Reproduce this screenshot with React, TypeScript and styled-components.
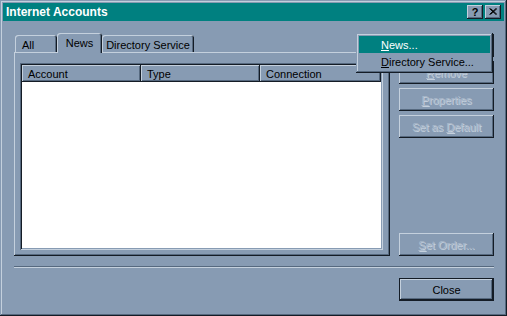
import styled, { createGlobalStyle } from 'styled-components'

const face = '#879bb3'
const light = '#c4d0dd'
const shadow = '#56697f'
const dark = '#141c26'
const teal = '#008080'

const GlobalStyle = createGlobalStyle`
  html, body {
    margin: 0;
    padding: 0;
    background: ${face};
  }
  body {
    font-family: "Liberation Sans", Arial, sans-serif;
    font-size: 11px;
  }
`

const Window = styled.div`
  position: relative;
  width: 507px;
  height: 316px;
  box-sizing: border-box;
  padding: 3px;
  background: ${face};
  box-shadow: inset -1px -1px 0 ${dark}, inset 1px 1px 0 ${face},
    inset -2px -2px 0 ${shadow}, inset 2px 2px 0 ${light};
  display: flex;
  flex-direction: column;
`

const TitleBar = styled.div`
  height: 18px;
  background: ${teal};
  display: flex;
  align-items: center;
  justify-content: space-between;
  padding: 0 3px 0 3px;
`

const Title = styled.span`
  color: #fff;
  font-weight: bold;
  font-size: 12px;
`

const TitleButtons = styled.div`
  display: flex;
  gap: 2px;
`

const TitleButton = styled.div`
  width: 16px;
  height: 14px;
  box-sizing: border-box;
  background: ${face};
  box-shadow: inset -1px -1px 0 ${dark}, inset 1px 1px 0 ${light},
    inset -2px -2px 0 ${shadow};
  display: flex;
  align-items: center;
  justify-content: center;
  font-weight: bold;
  font-size: 11px;
  color: #000;
  padding-bottom: 1px;
`

const Content = styled.div`
  flex: 1;
  display: flex;
  flex-direction: column;
  padding: 12px 10px 0 11px;
`

const MainRow = styled.div`
  display: flex;
  gap: 9px;
`

const TabArea = styled.div`
  width: 376px;
  display: flex;
  flex-direction: column;
`

const TabStrip = styled.div`
  height: 19px;
  display: flex;
  align-items: flex-end;
  padding-left: 1px;
`

const Tab = styled.div<{ $active?: boolean; $w: number; $left?: boolean }>`
  position: relative;
  z-index: ${(p) => (p.$active ? 2 : 1)};
  width: ${(p) => p.$w}px;
  height: ${(p) => (p.$active ? 20 : 17)}px;
  margin-bottom: ${(p) => (p.$active ? -1 : 0)}px;
  box-sizing: border-box;
  background: ${face};
  border-radius: 3px 3px 0 0;
  box-shadow: inset 1px 1px 0 ${light}, inset -1px 0 0 ${dark},
    inset -2px 0 0 ${shadow};
  display: flex;
  align-items: center;
  justify-content: ${(p) => (p.$left ? 'flex-start' : 'center')};
  padding-left: ${(p) => (p.$left ? 7 : 0)}px;
  padding-top: ${(p) => (p.$active ? 0 : 2)}px;
  color: #000;
  font-size: 11px;
`

const TabPanel = styled.div`
  height: 204px;
  box-sizing: border-box;
  background: ${face};
  box-shadow: inset -1px -1px 0 ${dark}, inset 1px 1px 0 ${light},
    inset -2px -2px 0 ${shadow};
  padding: 11px 7px 6px 6px;
  display: flex;
`

const ListBox = styled.div`
  flex: 1;
  box-sizing: border-box;
  background: #fff;
  padding: 2px;
  box-shadow: inset 1px 1px 0 ${shadow}, inset -1px -1px 0 ${light},
    inset 2px 2px 0 ${dark}, inset -2px -2px 0 ${face};
  display: flex;
  flex-direction: column;
`

const HeaderRow = styled.div`
  display: flex;
  height: 17px;
`

const HeaderCell = styled.div<{ $w?: number }>`
  ${(p) => (p.$w ? `width: ${p.$w}px;` : 'flex: 1;')}
  box-sizing: border-box;
  background: ${face};
  box-shadow: inset -1px -1px 0 ${dark}, inset 1px 1px 0 ${light},
    inset -2px -2px 0 ${shadow};
  padding: 1px 0 0 6px;
  display: flex;
  align-items: center;
  color: #000;
  font-size: 11px;
`

const ButtonColumn = styled.div`
  width: 95px;
  padding-top: 1px;
  display: flex;
  flex-direction: column;
  gap: 4px;
`

const Button = styled.div<{ $disabled?: boolean; $default?: boolean }>`
  height: 23px;
  box-sizing: border-box;
  background: ${face};
  display: flex;
  align-items: center;
  justify-content: center;
  font-size: 11px;
  color: ${(p) => (p.$disabled ? '#a9b8ca' : '#000')};
  text-shadow: ${(p) => (p.$disabled ? `1px 1px 0 ${light}` : 'none')};
  box-shadow: ${(p) =>
    p.$default
      ? `inset 0 0 0 1px ${dark}, inset -2px -2px 0 ${dark}, inset 2px 2px 0 ${light}, inset -3px -3px 0 ${shadow}`
      : `inset -1px -1px 0 ${dark}, inset 1px 1px 0 ${light}, inset -2px -2px 0 ${shadow}`};
  u {
    text-decoration: underline;
  }
`

const Spacer = styled.div`
  flex: 1;
`

const Separator = styled.div`
  margin-top: 10px;
  height: 0;
  border-top: 1px solid ${shadow};
  border-bottom: 1px solid ${light};
`

const Footer = styled.div`
  display: flex;
  justify-content: flex-end;
  margin-top: 10px;
`

const FooterButton = styled(Button)`
  width: 95px;
`

const Menu = styled.div`
  position: absolute;
  left: 356px;
  top: 33px;
  width: 137px;
  height: 40px;
  box-sizing: border-box;
  background: ${face};
  padding: 3px;
  box-shadow: inset -1px -1px 0 ${dark}, inset 1px 1px 0 ${face},
    inset -2px -2px 0 ${shadow}, inset 2px 2px 0 ${light};
  z-index: 5;
`

const MenuItem = styled.div<{ $active?: boolean }>`
  height: 17px;
  display: flex;
  align-items: center;
  padding-left: 22px;
  background: ${(p) => (p.$active ? teal : 'transparent')};
  color: ${(p) => (p.$active ? '#fff' : '#000')};
  font-size: 11px;
`

export default function App() {
  return (
    <>
      <GlobalStyle />
      <Window>
        <TitleBar>
          <Title>Internet Accounts</Title>
          <TitleButtons>
            <TitleButton>?</TitleButton>
            <TitleButton>
              <svg width="8" height="7" viewBox="0 0 8 7">
                <path d="M0.5 0.5 L7 6.5 M1.5 0.5 L8 6.5 M7 0.5 L0.5 6.5 M8 0.5 L1.5 6.5" stroke="#000" strokeWidth="1" />
              </svg>
            </TitleButton>
          </TitleButtons>
        </TitleBar>
        <Content>
          <MainRow>
            <TabArea>
              <TabStrip>
                <Tab $w={42} $left>All</Tab>
                <Tab $w={45} $active>News</Tab>
                <Tab $w={92}>Directory Service</Tab>
              </TabStrip>
              <TabPanel>
                <ListBox>
                  <HeaderRow>
                    <HeaderCell $w={119}>Account</HeaderCell>
                    <HeaderCell $w={119}>Type</HeaderCell>
                    <HeaderCell>Connection</HeaderCell>
                  </HeaderRow>
                </ListBox>
              </TabPanel>
            </TabArea>
            <ButtonColumn>
              <Button>Add</Button>
              <Button $disabled><span><u>R</u>emove</span></Button>
              <Button $disabled><span><u>P</u>roperties</span></Button>
              <Button $disabled><span>Set as <u>D</u>efault</span></Button>
              <Spacer />
              <Button $disabled><span><u>S</u>et Order...</span></Button>
            </ButtonColumn>
          </MainRow>
          <Separator />
          <Footer>
            <FooterButton $default>Close</FooterButton>
          </Footer>
        </Content>
        <Menu>
          <MenuItem $active><span><u>N</u>ews...</span></MenuItem>
          <MenuItem><span><u>D</u>irectory Service...</span></MenuItem>
        </Menu>
      </Window>
    </>
  )
}
